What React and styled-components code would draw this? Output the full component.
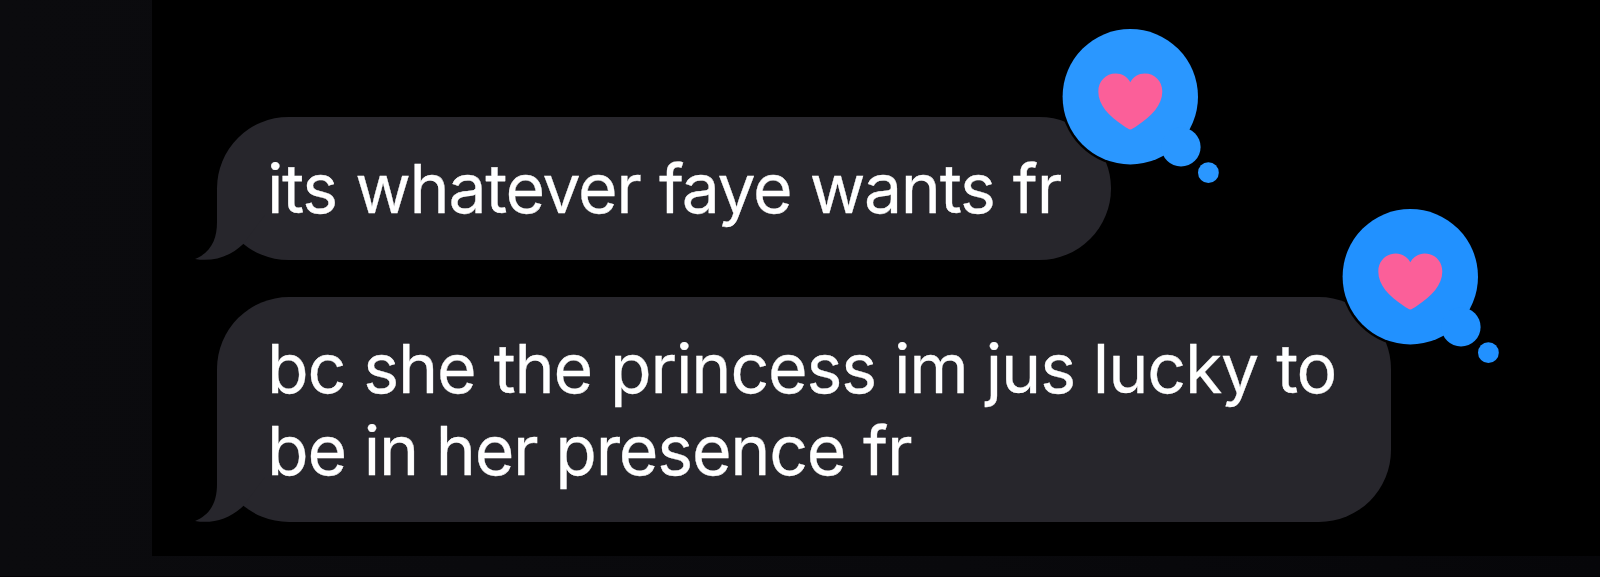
import React from "react";
import styled, { createGlobalStyle } from "styled-components";

const GlobalStyle = createGlobalStyle`
  * { box-sizing: border-box; }
  html, body { margin: 0; background: #000; overflow: hidden; }
`;

const Page = styled.div`
  display: flex;
  width: 1600px;
  height: 577px;
  background: linear-gradient(90deg, #0b0b0e 0%, #09090c 60%, #060609 100%);
  border-bottom: 1px solid #040205;
`;

const Conversation = styled.main`
  display: flex;
  flex-direction: column;
  align-items: flex-start;
  gap: 36.5px;
  width: 1448px;
  height: 556px;
  margin-left: 152px;
  padding: 116.5px 0 0 65px;
  background: #000;
`;

const Bubble = styled.article`
  position: relative;
  width: ${({ $width }) => $width}px;
  padding: 30px 0 31.5px 50px;
  border-radius: 72px;
  background: #27262c;
`;

const Line = styled.p`
  margin: 0;
  width: max-content;
  color: #fff;
  font-family: Inter, "Liberation Sans", sans-serif;
  font-size: 68px;
  font-weight: 400;
  line-height: 82px;
  white-space: pre;
  -webkit-text-stroke: 0.3px #fff;
  letter-spacing: ${({ $tracking }) => $tracking}px;
  word-spacing: ${({ $wordGap }) => $wordGap}px;
`;

const Tail = styled.svg`
  position: absolute;
  left: -22px;
  bottom: 0;
  fill: #27262c;
`;

const Reaction = styled.svg`
  position: absolute;
  top: -91.5px;
  right: -112px;
  fill: ${({ $tint }) => $tint};
`;

function BubbleTail() {
  return (
    <Tail width="70" height="72" viewBox="0 0 70 72" aria-hidden="true">
      <path d="M22 0V34C22 50 17 64 0 71C17.5 74 35 69 48.5 55.7L70 27V0Z" />
    </Tail>
  );
}

function LoveReaction({ tint }) {
  return (
    <Reaction $tint={tint} width="164" height="164" viewBox="0 0 164 164" role="img" aria-label="Loved">
      <circle cx="71.3" cy="71.7" r="70.2" fill="#000" />
      <circle cx="71.3" cy="71.7" r="67.7" />
      <circle cx="122" cy="122" r="19.6" />
      <circle cx="149.4" cy="147.7" r="10.4" />
      <path
        fill="#fb5f99"
        d="M71.3 57.3C68.3 51.8 63 48.5 56.8 48.5C46.8 48.5 39.3 56.2 39.3 66.5C39.3 80 50 91.3 64.5 100.7C67.5 102.7 69.8 104.4 71.3 104.4C72.8 104.4 75.1 102.7 78.1 100.7C92.6 91.3 103.3 80 103.3 66.5C103.3 56.2 95.8 48.5 85.8 48.5C79.6 48.5 74.3 51.8 71.3 57.3Z"
      />
    </Reaction>
  );
}

const messages = [
  {
    width: 893.7,
    tint: "#2a97ff",
    lines: [{ text: "its whatever faye wants fr", tracking: -1.35, wordGap: 0.6 }],
  },
  {
    width: 1174,
    tint: "#2191ff",
    lines: [
      { text: "bc she the princess im jus lucky to", tracking: -1.15, wordGap: 0 },
      { text: "be in her presence fr", tracking: -1.25, wordGap: 0 },
    ],
  },
];

export default function App() {
  return (
    <Page>
      <GlobalStyle />
      <Conversation>
        {messages.map((message) => (
          <Bubble key={message.lines[0].text} $width={message.width}>
            <BubbleTail />
            {message.lines.map((line) => (
              <Line key={line.text} $tracking={line.tracking} $wordGap={line.wordGap}>
                {line.text}
              </Line>
            ))}
            <LoveReaction tint={message.tint} />
          </Bubble>
        ))}
      </Conversation>
    </Page>
  );
}
